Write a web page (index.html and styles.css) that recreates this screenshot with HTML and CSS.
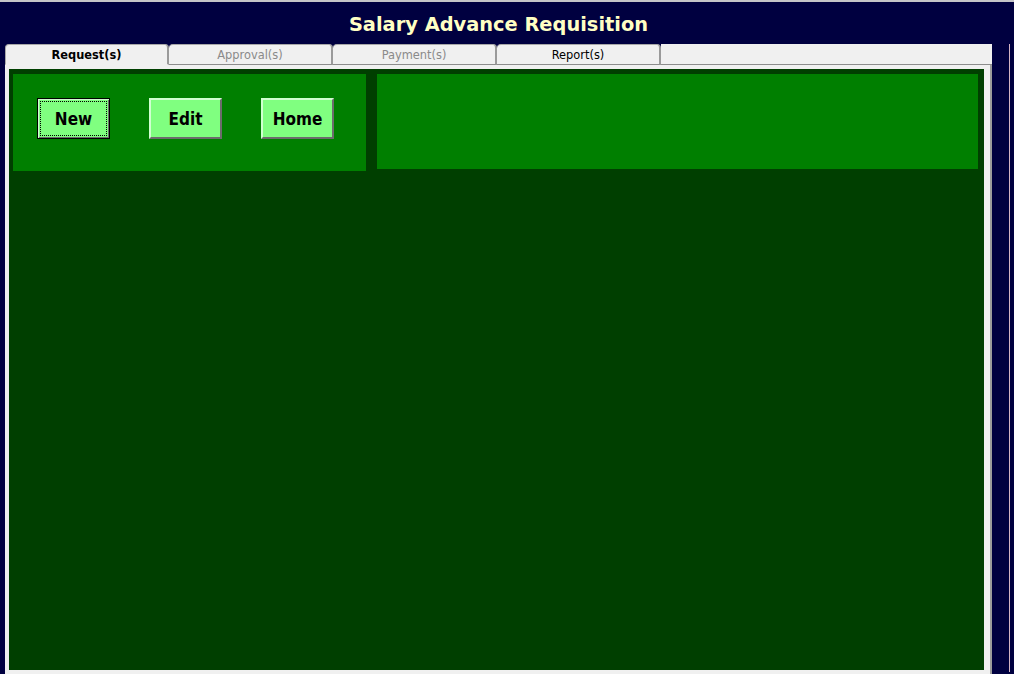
FILE: index.html
```html
<!DOCTYPE html>
<html>
<head>
<meta charset="utf-8">
<title>Salary Advance Requisition</title>
<link rel="stylesheet" href="styles.css">
</head>
<body>
<div class="screen">
  <div class="topline"></div>
  <div class="main">
    <div class="col">
      <h1 class="title">Salary Advance Requisition</h1>
      <div class="tabctl">
        <div class="tabs">
          <div class="tab first active">Request(s)</div>
          <div class="tab dim">Approval(s)</div>
          <div class="tab dim">Payment(s)</div>
          <div class="tab">Report(s)</div>
          <div class="tabfill"></div>
        </div>
        <div class="panel">
          <div class="stage">
            <div class="toolbar">
              <button class="btn focused"><span class="focus">New</span></button>
              <button class="btn"><span class="focus">Edit</span></button>
              <button class="btn"><span class="focus">Home</span></button>
            </div>
            <div class="info"></div>
          </div>
        </div>
      </div>
    </div>
    <div class="side"><div class="vline"></div></div>
  </div>
</div>
</body>
</html>
```

FILE: styles.css
```css
* { box-sizing: border-box; }

html, body {
  margin: 0;
  padding: 0;
  background: #000040;
  overflow: hidden;
}

.screen {
  width: 1014px;
  height: 674px;
  display: flex;
  flex-direction: column;
  background: #000040;
}

.topline {
  height: 2px;
  background: #c4c4c8;
  flex: none;
}

.main {
  flex: 1;
  display: flex;
  padding-left: 5px;
}

.col {
  width: 987px;
  display: flex;
  flex-direction: column;
}

.title {
  margin: 0;
  height: 42px;
  display: flex;
  align-items: center;
  justify-content: center;
  font-family: "DejaVu Sans", Verdana, sans-serif;
  font-weight: bold;
  font-size: 19.4px;
  color: #ffffc4;
  padding-top: 2px;
}

.tabctl {
  flex: 1;
  display: flex;
  flex-direction: column;
}

.tabs {
  height: 21px;
  display: flex;
  flex: none;
}

.tab {
  width: 164px;
  height: 21px;
  background: #f0f0f0;
  border-top: 1px solid #a8a8a8;
  border-right: 2px solid #9a9a9a;
  border-bottom: 1px solid #8c8c8c;
  border-radius: 4px 4px 0 0;
  font-family: "DejaVu Sans", Tahoma, sans-serif;
  font-size: 11.4px;
  line-height: 20px;
  text-align: center;
  color: #000000;
}

.tab.first {
  border-left: 1px solid #a8a8a8;
  width: 164px;
}

.tab.active {
  font-weight: bold;
  border-bottom-color: #f0f0f0;
}

.tab.dim {
  color: #8a8a8a;
}

.tabfill {
  flex: 1;
  background: #f0f0f0;
  border-bottom: 1px solid #8c8c8c;
}

.panel {
  flex: 1;
  background: #f0f0f0;
  padding: 4px 6px 4px 4px;
  border-right: 2px solid #9c9c9c;
  display: flex;
}

.stage {
  flex: 1;
  background: #003f00;
  display: flex;
  align-items: flex-start;
  padding: 5px 6px 0 4px;
}

.toolbar {
  width: 353px;
  height: 97px;
  background: #007f00;
  display: flex;
  align-items: flex-start;
  padding: 24px 0 0 24px;
  gap: 39px;
}

.info {
  flex: 1;
  height: 95px;
  margin-left: 11px;
  background: #007f00;
}

.btn {
  width: 73px;
  height: 41px;
  margin: 0;
  padding: 0;
  background: #80ff80;
  border: 2px solid;
  border-color: #d0ffd0 #6c6c6c #6c6c6c #d0ffd0;
  font-family: "DejaVu Sans", Tahoma, sans-serif;
  font-stretch: condensed;
  font-weight: bold;
  font-size: 17px;
  color: #000000;
  display: flex;
  align-items: stretch;
  justify-content: stretch;
}

.btn .focus {
  flex: 1;
  display: flex;
  align-items: center;
  justify-content: center;
  margin: 2px;
  border: 1px dotted transparent;
}

.btn.focused {
  border: 1px solid #000000;
  box-shadow: inset 1px 1px 0 #d0ffd0, inset -1px -1px 0 #6c6c6c;
}

.btn.focused .focus {
  margin: 2px;
  border-color: #000000;
}

.side {
  flex: 1;
  display: flex;
  justify-content: flex-end;
  padding: 42px 4px 2px 0;
}

.vline {
  width: 1px;
  background: #d4b4c4;
}
```
